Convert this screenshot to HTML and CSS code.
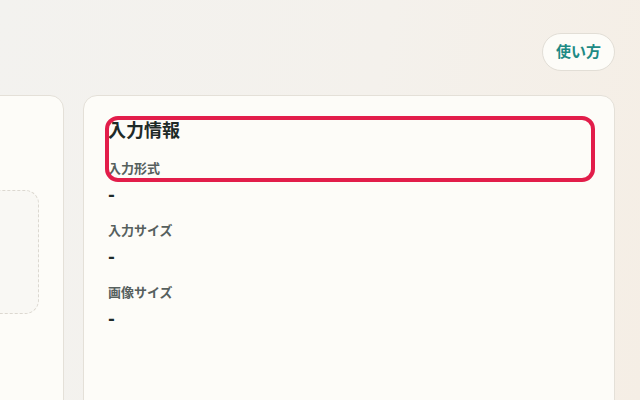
FILE: index.html
```html
<!DOCTYPE html>
<html lang="ja">
<head>
<meta charset="utf-8">
<link rel="stylesheet" href="styles.css">
</head>
<body>
<div class="page">
  <header class="header">
    <button class="help-btn">使い方</button>
  </header>
  <main class="main">
    <section class="card card-left">
      <div class="dropzone"></div>
    </section>
    <section class="card card-right">
      <h2 class="title">入力情報</h2>
      <dl class="info">
        <div class="group">
          <dt class="label">入力形式</dt>
          <dd class="value">-</dd>
        </div>
        <div class="group">
          <dt class="label">入力サイズ</dt>
          <dd class="value">-</dd>
        </div>
        <div class="group">
          <dt class="label">画像サイズ</dt>
          <dd class="value">-</dd>
        </div>
      </dl>
      <div class="highlight"></div>
    </section>
  </main>
</div>
</body>
</html>
```
FILE: styles.css
```css
html, body {
  margin: 0;
  height: 100%;
}
body {
  overflow: hidden;
  font-family: "Noto Sans CJK JP", "Noto Sans", sans-serif;
  background: linear-gradient(100deg, #f3f2ef 0%, #f4f1ec 55%, #f5eee5 100%);
  color: #1e2a28;
}
.page {
  padding: 33px 25px 0 0;
  height: 100%;
  box-sizing: border-box;
}
.header {
  display: flex;
  justify-content: flex-end;
}
.help-btn {
  height: 38px;
  padding: 0 13px 3px;
  border: 1px solid #e2ded6;
  border-radius: 19px;
  background: #fdfcf8;
  color: #1d8a84;
  font-family: inherit;
  font-size: 15px;
  font-weight: 700;
  line-height: 1;
}
.main {
  margin-top: 24px;
  display: flex;
  justify-content: flex-end;
  gap: 19px;
}
.card {
  flex-shrink: 0;
  background: #fdfcf8;
  border: 1px solid #e4e0d8;
  border-radius: 14px;
  box-sizing: border-box;
  height: 320px;
}
.card-left {
  width: 420px;
  padding: 94px 24px 0;
}
.dropzone {
  height: 122px;
  border: 1px dashed #dcd8d0;
  border-radius: 14px;
  background: #f9f8f4;
}
.card-right {
  width: 532px;
  padding: 20px 24px 0;
  position: relative;
}
.title {
  margin: 0 0 16px;
  font-size: 18px;
  font-weight: 700;
  line-height: 26px;
}
.info {
  margin: 0;
}
.group {
  margin-bottom: 12px;
}
.label {
  font-size: 13px;
  font-weight: 700;
  line-height: 20px;
  color: #56605e;
}
.value {
  margin: 0;
  font-size: 18px;
  font-weight: 900;
  line-height: 30px;
  color: #1e2a28;
}
.highlight {
  position: absolute;
  left: 21px;
  top: 20px;
  width: 490px;
  height: 66px;
  box-sizing: border-box;
  border: 4px solid #e21d4a;
  border-radius: 13px;
  pointer-events: none;
}
```
